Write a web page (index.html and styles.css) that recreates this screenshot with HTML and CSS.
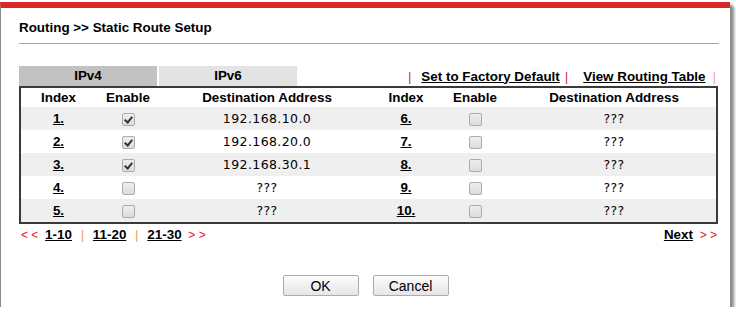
FILE: index.html
```html
<!DOCTYPE html>
<html lang="en">
<head>
    <meta charset="UTF-8">
    <title>Static Route Setup</title>
    <link rel="stylesheet" href="styles.css">
</head>
<body>
    <div class="frame">
        <div class="content">
            <h1 class="title">Routing &gt;&gt; Static Route Setup</h1>
            <hr class="rule">

            <!-- Tabs and links -->
            <div class="tabrow">
                <div class="tab tab-active">IPv4</div>
                <div class="tab">IPv6</div>
                <div class="links">
                    <span class="bar">|</span>
                    <a href="#">Set to Factory Default</a>
                    <span class="bar">|</span>
                    <a href="#" class="gap">View Routing Table</a>
                    <span class="bar bar-light">|</span>
                </div>
            </div>

            <table class="routes">
                <colgroup>
                    <col style="width:76px"><col style="width:64px"><col style="width:214px">
                    <col style="width:64px"><col style="width:74px"><col>
                </colgroup>
                <tr class="head">
                    <th>Index</th><th>Enable</th><th>Destination Address</th>
                    <th>Index</th><th>Enable</th><th>Destination Address</th>
                </tr>
                <tr class="shade">
                    <td><a href="#">1.</a></td><td><span class="cb on"></span></td><td class="addr">192.168.10.0</td>
                    <td><a href="#">6.</a></td><td><span class="cb"></span></td><td class="addr">???</td>
                </tr>
                <tr>
                    <td><a href="#">2.</a></td><td><span class="cb on"></span></td><td class="addr">192.168.20.0</td>
                    <td><a href="#">7.</a></td><td><span class="cb"></span></td><td class="addr">???</td>
                </tr>
                <tr class="shade">
                    <td><a href="#">3.</a></td><td><span class="cb on"></span></td><td class="addr">192.168.30.1</td>
                    <td><a href="#">8.</a></td><td><span class="cb"></span></td><td class="addr">???</td>
                </tr>
                <tr>
                    <td><a href="#">4.</a></td><td><span class="cb"></span></td><td class="addr">???</td>
                    <td><a href="#">9.</a></td><td><span class="cb"></span></td><td class="addr">???</td>
                </tr>
                <tr class="shade">
                    <td><a href="#">5.</a></td><td><span class="cb"></span></td><td class="addr">???</td>
                    <td><a href="#">10.</a></td><td><span class="cb"></span></td><td class="addr">???</td>
                </tr>
            </table>

            <!-- Paging -->
            <div class="pager">
                <div class="pages">
                    <span class="arrow">&lt; &lt;</span>
                    <a href="#">1-10</a>
                    <span class="sep">|</span>
                    <a href="#">11-20</a>
                    <span class="sep">|</span>
                    <a href="#">21-30</a>
                    <span class="arrow">&gt; &gt;</span>
                </div>
                <div class="pages">
                    <a href="#">Next</a>
                    <span class="arrow">&gt; &gt;</span>
                </div>
            </div>

            <div class="actions">
                <button type="button">OK</button>
                <button type="button">Cancel</button>
            </div>
        </div>
    </div>
</body>
</html>
```

FILE: styles.css
```css
body {
    margin: 0;
    padding-top: 2px;
    background: #ffffff;
    font-family: 'Liberation Sans', Arial, sans-serif;
    font-size: 13.4px;
    color: #000;
}

/* red header line sits on the frame's top border */
.frame {
    width: 729px;
    height: 299px;
    border-top: 6px solid #d92626;
    border-left: 1px solid #8a8a8a;
    background: #fff;
    box-shadow: 3px 3px 2px #8c8c8c, 5px 5px 2px #c8c8c8;
}

.content {
    padding: 12px 11px 0 18px;
}

.title {
    margin: 0;
    font-size: 13.4px;
    line-height: 16px;
    font-weight: bold;
}

.rule {
    margin: 7px 0 0 0;
    border: none;
    border-top: 1px solid #a6a6a6;
    height: 0;
}

.tabrow {
    display: flex;
    align-items: flex-end;
    margin-top: 22px;
}

.tab {
    width: 138px;
    height: 20px;
    line-height: 20px;
    margin-right: 2px;
    text-align: center;
    font-weight: bold;
    background: #e3e3e3;
}

.tab-active {
    background: #c2c2c2;
}

.links {
    margin-left: auto;
    display: flex;
    align-items: center;
    height: 20px;
    padding-right: 3px;
}

.links a {
    color: #000;
    font-weight: bold;
    margin-left: 10px;
}

.links a.gap {
    margin-left: 15px;
}

.bar {
    color: #d8284a;
    margin-left: 5px;
}

.bar-light {
    color: #f4a0b8;
    margin-left: 7px;
}

.routes {
    width: 699px;
    border-collapse: collapse;
    table-layout: fixed;
    border: 2px solid #3a3a3a;
}

.routes th {
    height: 19px;
    padding: 0;
    font-weight: bold;
    text-align: center;
}

.routes td {
    height: 23px;
    padding: 0;
    text-align: center;
}

.routes tr.shade td {
    background: #efefef;
}

.routes a {
    color: #000;
    font-weight: bold;
}

.addr {
    font-family: 'DejaVu Sans', Verdana, sans-serif;
    font-size: 12.5px;
    letter-spacing: 0.4px;
}

.cb {
    display: inline-block;
    width: 11px;
    height: 11px;
    border: 1px solid #acacac;
    border-radius: 2px;
    background: linear-gradient(#eeeeee, #dcdcdc);
    vertical-align: middle;
    position: relative;
}

.cb.on::after {
    content: "";
    position: absolute;
    left: 3px;
    top: 1px;
    width: 3px;
    height: 6px;
    border-right: 2px solid #333;
    border-bottom: 2px solid #333;
    transform: rotate(40deg);
}

.pager {
    display: flex;
    justify-content: space-between;
    margin-top: 3px;
    padding: 0 2px;
}

.pages a {
    color: #000;
    font-weight: bold;
    margin: 0 3px;
}

.arrow {
    color: #e8101a;
    font-size: 12px;
}

.sep {
    color: #f4a060;
    margin: 0 2px;
}

.actions {
    display: flex;
    justify-content: center;
    gap: 14px;
    margin-top: 33px;
    padding-right: 7px;
}

button {
    width: 76px;
    height: 21px;
    padding: 0;
    font-family: 'Liberation Sans', Arial, sans-serif;
    font-size: 14px;
    color: #000;
    background: linear-gradient(#fbfbfb, #e6e6e6);
    border: 1px solid #adadad;
    border-radius: 2px;
}
```
